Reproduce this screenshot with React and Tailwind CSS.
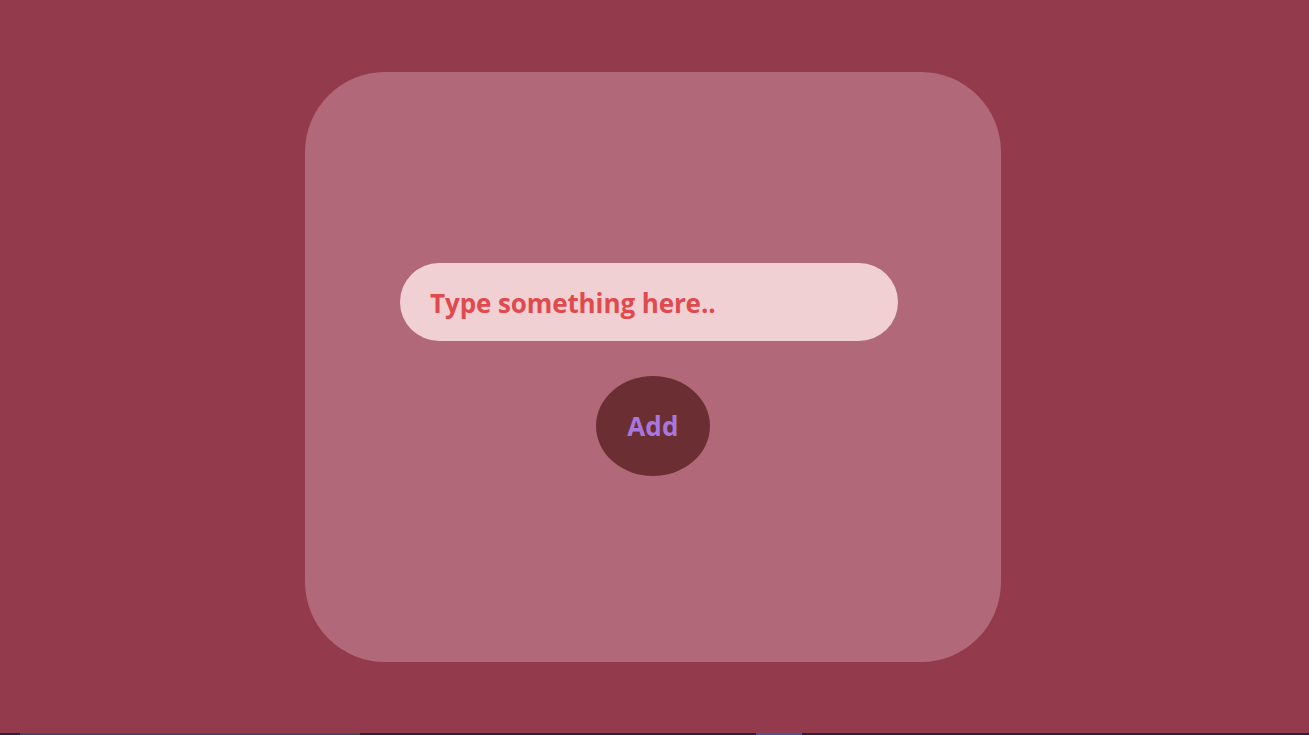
export default function App() {
  return (
    <div className="w-[1309px] h-[735px] flex flex-col bg-[#943a4d] font-['Open_Sans','Noto_Sans',sans-serif]">
      <div className="flex-1 flex justify-center pt-[72px] pr-[3px]">
        <div className="w-[696px] h-[590px] rounded-[80px] bg-[#b16878] flex flex-col items-center pt-[191px]">
          <div className="w-[498px] h-[78px] -ml-[8px] rounded-full bg-[#f0d0d2] flex items-center pl-[30px] pt-[3px]">
            <span className="text-[26px] font-bold text-[#e04a4e] tracking-[-0.1px]">Type something here..</span>
          </div>
          <button className="mt-[35px] w-[114px] h-[100px] rounded-[50%] bg-[#6b2f33] flex items-center justify-center">
            <span className="text-[26px] font-bold text-[#a877dc] tracking-[0.3px]">Add</span>
          </button>
        </div>
      </div>
      <div className="h-[2px] bg-[#232343] flex">
        <div className="ml-[20px] w-[340px] bg-[#3a4a6a]" />
        <div className="ml-[396px] w-[46px] bg-[#3a5aa0]" />
      </div>
    </div>
  );
}
